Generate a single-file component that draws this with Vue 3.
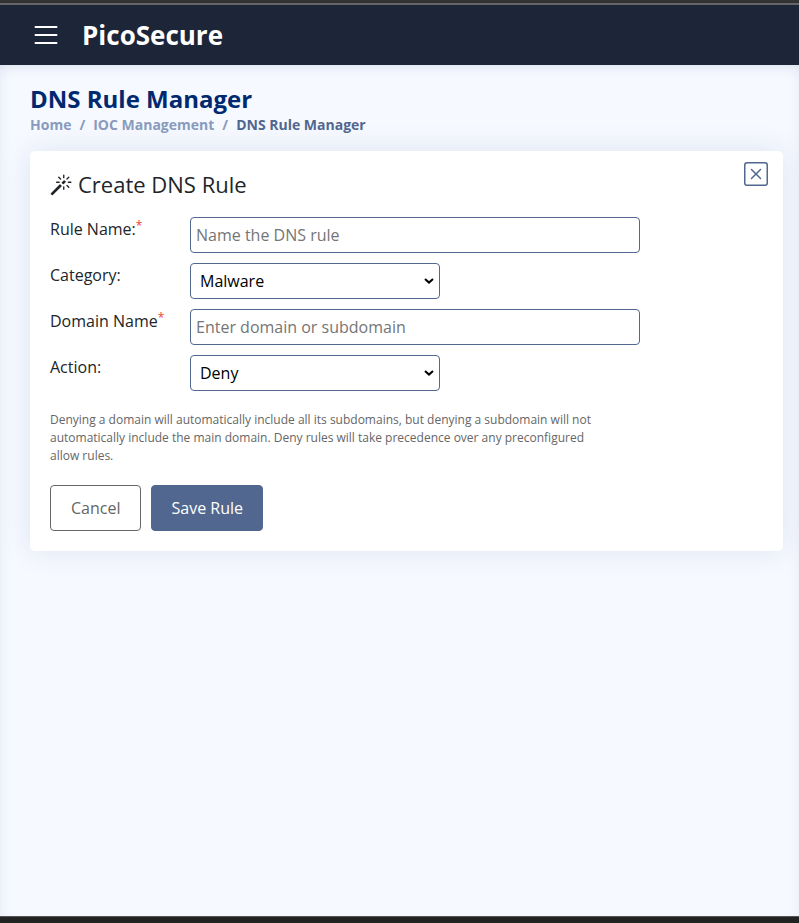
<script setup>
import { ref } from 'vue'

const name = ref('')
const category = ref('Malware')
const domain = ref('')
const action = ref('Deny')
</script>

<template>
  <div class="app">
    <header class="topbar">
      <svg class="menu" viewBox="0 0 32 32" fill="none" stroke="currentColor" stroke-width="2" stroke-linecap="round"><path d="M5.5 8h21M5.5 16h21M5.5 24h21" /></svg>
      <span class="brand">PicoSecure</span>
    </header>
    <main class="content">
      <h1>DNS Rule Manager</h1>
      <nav class="crumbs"><span>Home</span><i>/</i><span>IOC Management</span><i>/</i><span class="current">DNS Rule Manager</span></nav>
      <section class="card">
        <div class="card-head">
          <h2>
            <svg class="wand" viewBox="0 0 16 16" fill="currentColor"><path d="M9.5 2.672a.5.5 0 1 0 1 0V.843a.5.5 0 0 0-1 0zm4.5.035A.5.5 0 0 0 13.293 2L12 3.293a.5.5 0 1 0 .707.707zM7.293 4A.5.5 0 1 0 8 3.293L6.707 2A.5.5 0 0 0 6 2.707zm-.621 2.5a.5.5 0 1 0 0-1H4.843a.5.5 0 1 0 0 1zm8.485 0a.5.5 0 1 0 0-1h-1.829a.5.5 0 0 0 0 1zM13.293 10A.5.5 0 1 0 14 9.293L12.707 8a.5.5 0 1 0-.707.707zM9.5 11.157a.5.5 0 0 0 1 0V9.328a.5.5 0 0 0-1 0zm1.854-5.097a.5.5 0 0 0 0-.706l-.708-.708a.5.5 0 0 0-.707 0L8.646 5.94a.5.5 0 0 0 0 .707l.708.708a.5.5 0 0 0 .707 0l1.293-1.293Zm-3 3a.5.5 0 0 0 0-.706l-.708-.708a.5.5 0 0 0-.707 0L.646 13.94a.5.5 0 0 0 0 .707l.707.707a.5.5 0 0 0 .707 0z" /></svg>
            <span>Create DNS Rule</span>
          </h2>
          <svg class="close" viewBox="0 0 16 16" fill="currentColor"><path d="M14 1a1 1 0 0 1 1 1v12a1 1 0 0 1-1 1H2a1 1 0 0 1-1-1V2a1 1 0 0 1 1-1zM2 0a2 2 0 0 0-2 2v12a2 2 0 0 0 2 2h12a2 2 0 0 0 2-2V2a2 2 0 0 0-2-2z" /><path d="M4.646 4.646a.5.5 0 0 1 .708 0L8 7.293l2.646-2.647a.5.5 0 0 1 .708.708L8.707 8l2.647 2.646a.5.5 0 0 1-.708.708L8 8.707l-2.646 2.647a.5.5 0 0 1-.708-.708L7.293 8 4.646 5.354a.5.5 0 0 1 0-.708" /></svg>
        </div>
        <form class="form" @submit.prevent>
          <label for="name">Rule Name:<sup>*</sup></label>
          <input id="name" v-model="name" placeholder="Name the DNS rule">
          <label for="category">Category:</label>
          <div class="picker">
            <select id="category" v-model="category"><option>Malware</option></select>
            <svg class="arrow" viewBox="0 0 10 6"><path d="M1 1l4 3.6L9 1" /></svg>
          </div>
          <label for="domain">Domain Name<sup>*</sup></label>
          <input id="domain" v-model="domain" placeholder="Enter domain or subdomain">
          <label for="action">Action:</label>
          <div class="picker">
            <select id="action" v-model="action"><option>Deny</option></select>
            <svg class="arrow" viewBox="0 0 10 6"><path d="M1 1l4 3.6L9 1" /></svg>
          </div>
        </form>
        <p class="note">Denying a domain will automatically include all its subdomains, but denying a subdomain will not automatically include the main domain. Deny rules will take precedence over any preconfigured allow rules.</p>
        <div class="actions">
          <button type="button" class="cancel">Cancel</button>
          <button type="button" class="save">Save Rule</button>
        </div>
      </section>
    </main>
    <footer class="bottom"></footer>
  </div>
</template>

<style>
body { margin: 0; overflow: hidden; }
</style>

<style scoped>
.app, .app * { box-sizing: border-box; }
.app {
  display: flex;
  flex-direction: column;
  height: 923px;
  font: 16px/24px "Open Sans", sans-serif;
  color: #212529;
}
.topbar {
  flex: none;
  display: flex;
  align-items: center;
  height: 65px;
  padding: 5px 0 0 30px;
  color: #fff;
  background: linear-gradient(#333 3px, #666 3px, #666 5px, #1d2538 5px);
}
.menu { width: 32px; height: 32px; }
.brand { margin-left: 20px; font-size: 26px; line-height: 36px; font-weight: 700; }
.content {
  flex: 1;
  padding: 19px 16px 0 30px;
  background: #f6f9ff;
  box-shadow: inset 0 10px 15px -10px rgba(1, 41, 112, .12), inset 10px 0 15px -10px rgba(1, 41, 112, .07), inset -10px 0 15px -10px rgba(1, 41, 112, .05);
}
h1 { margin: 0; font-size: 24px; line-height: 29px; font-weight: 700; color: #012970; }
.crumbs { display: flex; margin-top: 1px; font-size: 14px; line-height: 21px; font-weight: 700; color: #899bbd; }
.crumbs i { margin: 0 8px; font-style: normal; }
.crumbs .current { color: #51678f; }
.card {
  height: 400px;
  margin-top: 16px;
  padding: 20px;
  border-radius: 5px;
  background: #fff;
  box-shadow: 0 0 30px rgba(1, 41, 112, .1);
}
.card-head { display: flex; justify-content: space-between; height: 46px; }
h2 { display: flex; align-items: flex-start; margin: 0; font-size: 22px; line-height: 27px; font-weight: 400; }
.wand { width: 22px; height: 22px; margin: 3px 6px 0 0; }
.close { width: 24px; height: 24px; margin: -9px -5px 0 0; color: #51678f; }
.form { display: grid; grid-template-columns: 140px 1fr; grid-auto-rows: 36px; row-gap: 10px; }
label { display: block; }
sup { position: relative; top: 1px; font-size: 12px; line-height: 0; vertical-align: super; color: #f23c3c; }
input, select {
  width: 450px;
  height: 36px;
  padding: 5px;
  border: 1px solid #51678f;
  border-radius: 4px;
  background: #fff;
  color: #000;
  font: inherit;
}
input::placeholder { color: #757575; }
.picker { position: relative; width: 250px; height: 36px; }
select { display: block; width: 100%; padding: 5px 9px; appearance: none; }
.arrow {
  position: absolute;
  right: 6px;
  top: 15px;
  width: 10px;
  height: 6px;
  fill: none;
  stroke: #000;
  stroke-width: 2;
  pointer-events: none;
}
.note { width: 560px; margin: 20px 0; font-size: 12px; line-height: 18px; color: #666; }
.actions { display: flex; gap: 10px; }
button { height: 46px; padding: 0 20px; border: 1px solid #51678f; border-radius: 4px; font: inherit; }
.cancel { border-color: #666; background: #fff; color: #666; }
.save { padding: 0 19px; background: #51678f; color: #fff; }
.bottom { flex: none; height: 7px; border-top: 1px solid #555; background: #222; }
</style>
